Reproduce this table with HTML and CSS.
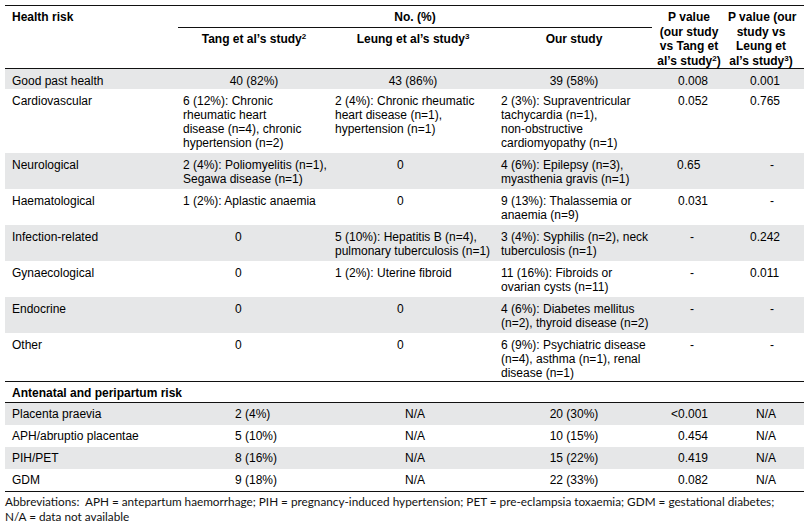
FILE: index.html
```html
<!DOCTYPE html>
<html lang="en">
<head>
<meta charset="utf-8">
<title>Health risk comparison</title>
<link rel="stylesheet" href="styles.css">
</head>
<body>
<div class="page">
<table class="risk">
  <colgroup>
    <col class="w1"><col class="w2"><col class="w3"><col class="w4"><col class="w5"><col class="w6">
  </colgroup>
  <thead>
    <tr class="hrow1">
      <th rowspan="2" class="hl">Health risk</th>
      <th colspan="3" class="no">No. (%)</th>
      <th rowspan="2" class="pv">P value<br>(our study<br>vs Tang et<br>al’s study<sup>2</sup>)</th>
      <th rowspan="2" class="pv pv6">P value (our<br>study vs<br>Leung et<br>al’s study<sup>3</sup>)</th>
    </tr>
    <tr class="hrow2">
      <th class="sub">Tang et al’s study<sup>2</sup></th>
      <th class="sub">Leung et al’s study<sup>3</sup></th>
      <th class="sub">Our study</th>
    </tr>
  </thead>
  <tbody class="health">
    <tr class="first">
      <td class="lab">Good past health</td>
      <td class="c">40 (82%)</td>
      <td class="c">43 (86%)</td>
      <td class="c">39 (58%)</td>
      <td class="p5">0.008</td>
      <td class="p6">0.001</td>
    </tr>
    <tr>
      <td class="lab">Cardiovascular</td>
      <td class="t">6 (12%): Chronic<br>rheumatic heart<br>disease (n=4), chronic<br>hypertension (n=2)</td>
      <td class="t">2 (4%): Chronic rheumatic<br>heart disease (n=1),<br>hypertension (n=1)</td>
      <td class="t">2 (3%): Supraventricular<br>tachycardia (n=1),<br>non-obstructive<br>cardiomyopathy (n=1)</td>
      <td class="p5">0.052</td>
      <td class="p6">0.765</td>
    </tr>
    <tr>
      <td class="lab">Neurological</td>
      <td class="t">2 (4%): Poliomyelitis (n=1),<br>Segawa disease (n=1)</td>
      <td class="z3">0</td>
      <td class="t">4 (6%): Epilepsy (n=3),<br>myasthenia gravis (n=1)</td>
      <td class="p5 short">0.65</td>
      <td class="d6">-</td>
    </tr>
    <tr>
      <td class="lab">Haematological</td>
      <td class="t">1 (2%): Aplastic anaemia</td>
      <td class="z3">0</td>
      <td class="t">9 (13%): Thalassemia or<br>anaemia (n=9)</td>
      <td class="p5">0.031</td>
      <td class="d6">-</td>
    </tr>
    <tr>
      <td class="lab">Infection-related</td>
      <td class="z2">0</td>
      <td class="t">5 (10%): Hepatitis B (n=4),<br>pulmonary tuberculosis (n=1)</td>
      <td class="t">3 (4%): Syphilis (n=2), neck<br>tuberculosis (n=1)</td>
      <td class="d5">-</td>
      <td class="p6">0.242</td>
    </tr>
    <tr>
      <td class="lab">Gynaecological</td>
      <td class="z2">0</td>
      <td class="t">1 (2%): Uterine fibroid</td>
      <td class="t">11 (16%): Fibroids or<br>ovarian cysts (n=11)</td>
      <td class="d5">-</td>
      <td class="p6">0.011</td>
    </tr>
    <tr>
      <td class="lab">Endocrine</td>
      <td class="z2">0</td>
      <td class="z3">0</td>
      <td class="t">4 (6%): Diabetes mellitus<br>(n=2), thyroid disease (n=2)</td>
      <td class="d5">-</td>
      <td class="d6">-</td>
    </tr>
    <tr class="last">
      <td class="lab">Other</td>
      <td class="z2">0</td>
      <td class="z3">0</td>
      <td class="t">6 (9%): Psychiatric disease<br>(n=4), asthma (n=1), renal<br>disease (n=1)</td>
      <td class="d5">-</td>
      <td class="d6">-</td>
    </tr>
  </tbody>
  <tbody class="ante">
    <tr class="sec">
      <th colspan="6">Antenatal and peripartum risk</th>
    </tr>
    <tr>
      <td class="lab">Placenta praevia</td>
      <td class="z2">2 (4%)</td>
      <td class="na3">N/A</td>
      <td class="c">20 (30%)</td>
      <td class="p5">&lt;0.001</td>
      <td class="na6">N/A</td>
    </tr>
    <tr>
      <td class="lab">APH/abruptio placentae</td>
      <td class="z2">5 (10%)</td>
      <td class="na3">N/A</td>
      <td class="c">10 (15%)</td>
      <td class="p5">0.454</td>
      <td class="na6">N/A</td>
    </tr>
    <tr>
      <td class="lab">PIH/PET</td>
      <td class="z2">8 (16%)</td>
      <td class="na3">N/A</td>
      <td class="c">15 (22%)</td>
      <td class="p5">0.419</td>
      <td class="na6">N/A</td>
    </tr>
    <tr>
      <td class="lab">GDM</td>
      <td class="z2">9 (18%)</td>
      <td class="na3">N/A</td>
      <td class="c">22 (33%)</td>
      <td class="p5">0.082</td>
      <td class="na6">N/A</td>
    </tr>
  </tbody>
</table>
<p class="note">Abbreviations:&nbsp; APH = antepartum haemorrhage; PIH = pregnancy-induced hypertension; PET = pre-eclampsia toxaemia; GDM = gestational diabetes;<br>N/A = data not available</p>
</div>
</body>
</html>
```

FILE: styles.css
```css
html, body {
  margin: 0;
  padding: 0;
  background: #ffffff;
}

body {
  font-family: "Liberation Sans", Arial, sans-serif;
  color: #000000;
}

.page {
  padding: 5px 7px 0 5px;
}

.risk {
  width: 799px;
  table-layout: fixed;
  border-collapse: collapse;
  font-size: 12px;
  line-height: 14px;
  border-top: 1px solid #111111;
  border-bottom: 1px solid #111111;
}

.w1 { width: 173px; }
.w2 { width: 152px; }
.w3 { width: 166px; }
.w4 { width: 156px; }
.w5 { width: 74px; }
.w6 { width: 78px; }

.risk th,
.risk td {
  white-space: nowrap;
  vertical-align: top;
  text-align: left;
  padding: 5px 5px 3px 5px;
}

.risk th {
  font-weight: bold;
}

.risk sup {
  font-size: 8px;
  line-height: 0;
  vertical-align: 4px;
}

/* header */
.hrow1 {
  height: 21px;
}

.hrow2 {
  height: 41px;
}

.hrow1 th {
  padding-top: 4px;
  padding-bottom: 3px;
}

.risk .hl {
  padding-left: 7px;
  border-bottom: 1px solid #111111;
}

.risk .no {
  text-align: center;
  border-bottom: 1px solid #111111;
}

.risk .sub {
  text-align: center;
  padding-top: 4px;
  padding-bottom: 0;
  border-bottom: 1px solid #111111;
}

.risk .pv {
  text-align: center;
  vertical-align: bottom;
  line-height: 14.5px;
  padding: 3px 2px 0 2px;
  border-bottom: 1px solid #111111;
}

.risk .pv6 {
  padding-right: 10px;
}

/* body */
.health tr:nth-child(odd) td {
  background: #e6e7e8;
}

.health tr.first td {
  padding-bottom: 1px;
}

.health tr.last td {
  padding-bottom: 1px;
}

.ante tr:nth-child(even) td {
  background: #e6e7e8;
}

.risk .lab {
  padding-left: 7px;
}

.risk .c {
  text-align: center;
}

.risk .z2 {
  padding-left: 57px;
}

.risk .z3 {
  padding-left: 67px;
}

.risk .p5 {
  text-align: right;
  padding-right: 18px;
}

.risk .p5.short {
  text-align: left;
  padding-left: 25px;
}

.risk .d5 {
  padding-left: 38px;
}

.risk .p6 {
  padding-left: 24px;
}

.risk .d6 {
  padding-left: 44px;
}

.risk .na3 {
  padding-left: 75px;
}

.risk .na6 {
  padding-left: 30px;
}

.ante td {
  padding-top: 4px;
  padding-bottom: 4px;
}

.ante .sec th {
  padding: 4px 5px 2px 7px;
  border-top: 1px solid #111111;
  border-bottom: 1px solid #111111;
}

.note {
  margin: 2px 0 0 0;
  font-family: "Lato", "Liberation Sans", sans-serif;
  font-size: 11.75px;
  line-height: 15px;
  color: #111111;
}
```
